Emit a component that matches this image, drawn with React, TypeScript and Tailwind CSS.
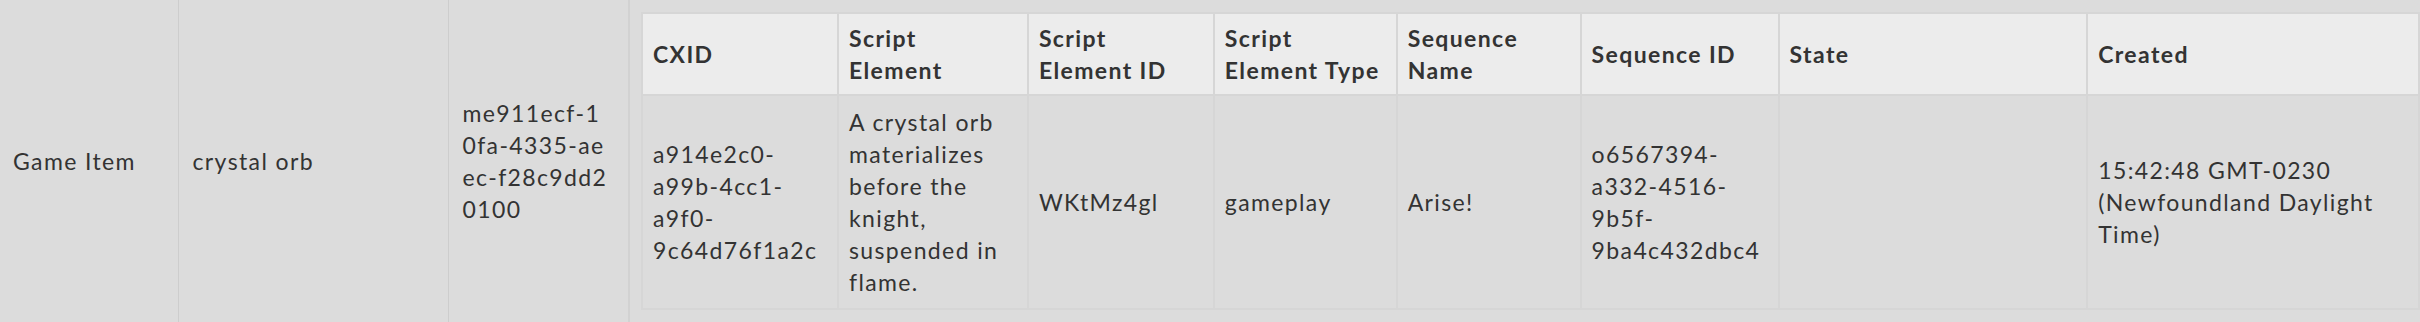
const columns = [
  { label: "CXID", width: "w-[194px]" },
  { label: "Script Element", width: "w-[188px]" },
  { label: "Script Element ID", width: "w-[184px]" },
  { label: "Script Element Type", width: "w-[181px]" },
  { label: "Sequence Name", width: "w-[182px]" },
  { label: "Sequence ID", width: "w-[196px]" },
  { label: "State", width: "w-[307px]" },
  { label: "Created", width: "w-[330px]" },
];

const row = [
  "a914e2c0-a99b-4cc1-a9f0-9c64d76f1a2c",
  "A crystal orb materializes before the knight, suspended in flame.",
  "WKtMz4gl",
  "gameplay",
  "Arise!",
  "o6567394-a332-4516-9b5f-9ba4c432dbc4",
  "",
  "15:42:48 GMT-0230 (Newfoundland Daylight Time)",
];

function ScriptTable() {
  return (
    <table className="table-fixed border-separate border-spacing-[2px] bg-[#d6d6d6] text-left">
      <thead>
        <tr>
          {columns.map((c) => (
            <th
              key={c.label}
              className={`${c.width} bg-[#ececec] pl-[10px] pr-[16px] py-[8px] align-middle font-bold`}
            >
              {c.label}
            </th>
          ))}
        </tr>
      </thead>
      <tbody>
        <tr>
          {row.map((v, i) => (
            <td key={i} className="bg-[#dcdcdc] px-[10px] py-[10px] align-middle">
              {v}
            </td>
          ))}
        </tr>
      </tbody>
    </table>
  );
}

export default function App() {
  return (
    <div
      className="h-[322px] w-[2420px] overflow-hidden bg-[#dcdcdc] text-[23px] leading-[32px] tracking-[0.06em] text-[#333333]"
      style={{ fontFamily: "Lato, 'Noto Sans', sans-serif" }}
    >
      <table className="table-fixed border-collapse">
        <tbody>
          <tr className="h-[322px]">
            <td className="w-[178px] border-r border-[#cdcdcd] px-[13px] align-middle">Game Item</td>
            <td className="w-[270px] border-r border-[#cdcdcd] px-[14px] align-middle">crystal orb</td>
            <td className="w-[181px] border-r-2 border-[#d2d2d2] pl-[14px] pr-[20px] align-middle break-all">
              me911ecf-10fa-4335-aeec-f28c9dd20100
            </td>
            <td className="pl-[11px] pt-[12px] pb-[10px] align-top">
              <ScriptTable />
            </td>
          </tr>
        </tbody>
      </table>
    </div>
  );
}
